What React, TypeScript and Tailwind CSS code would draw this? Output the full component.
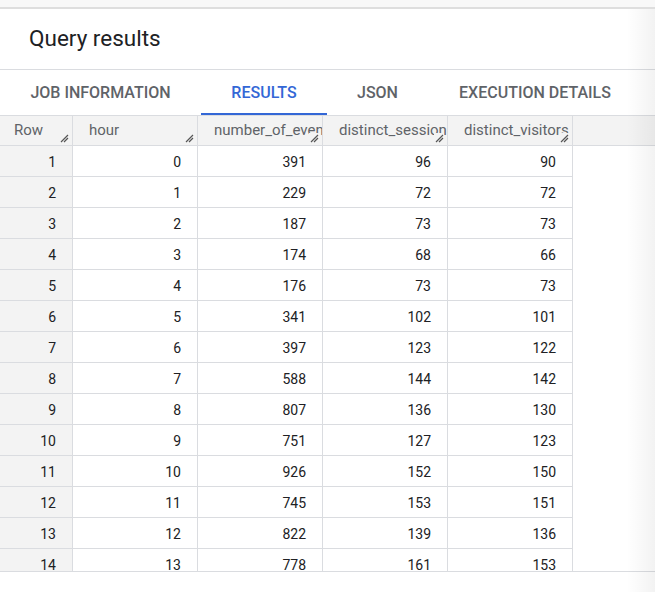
const ROWS: [number, number, number, number, number][] = [
  [1, 0, 391, 96, 90],
  [2, 1, 229, 72, 72],
  [3, 2, 187, 73, 73],
  [4, 3, 174, 68, 66],
  [5, 4, 176, 73, 73],
  [6, 5, 341, 102, 101],
  [7, 6, 397, 123, 122],
  [8, 7, 588, 144, 142],
  [9, 8, 807, 136, 130],
  [10, 9, 751, 127, 123],
  [11, 10, 926, 152, 150],
  [12, 11, 745, 153, 151],
  [13, 12, 822, 139, 136],
  [14, 13, 778, 161, 153],
];

const TABS = [
  { label: "JOB INFORMATION", w: "w-[201px]" },
  { label: "RESULTS", w: "w-[126px]", active: true },
  { label: "JSON", w: "w-[101px]" },
  { label: "EXECUTION DETAILS", w: "w-[214px]" },
];

const COLS = [
  { label: "Row", w: "w-[73px]" },
  { label: "hour", w: "w-[125px]" },
  { label: "number_of_events", w: "w-[125px]" },
  { label: "distinct_sessions", w: "w-[125px]" },
  { label: "distinct_visitors", w: "w-[125px]" },
];

function Grip() {
  return (
    <svg
      width="10"
      height="10"
      viewBox="0 0 10 10"
      className="absolute right-[3px] bottom-[2px] bg-[#f3f3f3]"
    >
      <path d="M2 9 L9 2 M5 9 L9 5" stroke="#555" strokeWidth="1.2" />
    </svg>
  );
}

export default function App() {
  return (
    <div className="relative h-[592px] w-[655px] overflow-hidden bg-white font-['Roboto',sans-serif]">
      <div className="h-[9px] bg-[#f8f8f8] border-b-2 border-[#dedede]" />

      <div className="h-[61px] border-b border-[#dadce0] pl-[29px] pt-[14px] text-[22.5px] leading-[30px] text-[#202124]">
        Query results
      </div>

      <div className="flex h-[45px]">
        {TABS.map((t) => (
          <div
            key={t.label}
            className={[
              "flex shrink-0 items-center justify-center text-[16px] font-medium",
              t.w,
              t.active
                ? "border-b-2 border-[#3367d6] pt-[2px] text-[#3367d6]"
                : "text-[#5f6368]",
            ].join(" ")}
          >
            {t.label}
          </div>
        ))}
      </div>

      <div className="border-b border-[#dadce0]">
        <div className="flex h-[31px] border-y border-[#dadce0] bg-[#f3f3f3]">
          {COLS.map((c) => (
            <div
              key={c.label}
              className={[
                "relative shrink-0 overflow-hidden whitespace-nowrap border-r border-[#dadce0] pt-[3px] text-[15px] text-[#5f6368]",
                c.w,
                c.label === "Row" ? "pl-[14px]" : "pl-[16px]",
              ].join(" ")}
            >
              {c.label}
              <Grip />
            </div>
          ))}
        </div>

        <div className="h-[425px] overflow-hidden">
          {ROWS.map((r) => (
            <div key={r[0]} className="flex h-[31px]">
              {r.map((v, i) => (
                <div
                  key={i}
                  className={[
                    "flex shrink-0 items-center justify-end border-b border-r border-[#dadce0] pr-[16px] pt-[3px] text-[14px] text-[#202124]",
                    COLS[i].w,
                    i === 0 ? "bg-[#f3f3f3]" : "",
                  ].join(" ")}
                >
                  {v}
                </div>
              ))}
            </div>
          ))}
        </div>
      </div>

      <div className="pointer-events-none absolute right-0 top-[9px] h-full w-[28px] bg-gradient-to-r from-transparent to-black/[0.05]" />
    </div>
  );
}
